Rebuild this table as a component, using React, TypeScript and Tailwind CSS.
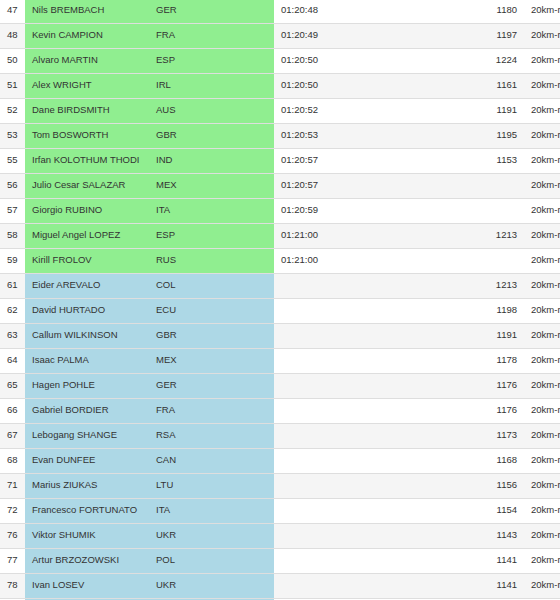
type Row = {
  rank: number;
  name: string;
  nat: string;
  time: string;
  points: string;
  group: "q" | "p";
};

const rows: Row[] = [
  { rank: 47, name: "Nils BREMBACH", nat: "GER", time: "01:20:48", points: "1180", group: "q" },
  { rank: 48, name: "Kevin CAMPION", nat: "FRA", time: "01:20:49", points: "1197", group: "q" },
  { rank: 50, name: "Alvaro MARTIN", nat: "ESP", time: "01:20:50", points: "1224", group: "q" },
  { rank: 51, name: "Alex WRIGHT", nat: "IRL", time: "01:20:50", points: "1161", group: "q" },
  { rank: 52, name: "Dane BIRDSMITH", nat: "AUS", time: "01:20:52", points: "1191", group: "q" },
  { rank: 53, name: "Tom BOSWORTH", nat: "GBR", time: "01:20:53", points: "1195", group: "q" },
  { rank: 55, name: "Irfan KOLOTHUM THODI", nat: "IND", time: "01:20:57", points: "1153", group: "q" },
  { rank: 56, name: "Julio Cesar SALAZAR", nat: "MEX", time: "01:20:57", points: "", group: "q" },
  { rank: 57, name: "Giorgio RUBINO", nat: "ITA", time: "01:20:59", points: "", group: "q" },
  { rank: 58, name: "Miguel Angel LOPEZ", nat: "ESP", time: "01:21:00", points: "1213", group: "q" },
  { rank: 59, name: "Kirill FROLOV", nat: "RUS", time: "01:21:00", points: "", group: "q" },
  { rank: 61, name: "Eider AREVALO", nat: "COL", time: "", points: "1213", group: "p" },
  { rank: 62, name: "David HURTADO", nat: "ECU", time: "", points: "1198", group: "p" },
  { rank: 63, name: "Callum WILKINSON", nat: "GBR", time: "", points: "1191", group: "p" },
  { rank: 64, name: "Isaac PALMA", nat: "MEX", time: "", points: "1178", group: "p" },
  { rank: 65, name: "Hagen POHLE", nat: "GER", time: "", points: "1176", group: "p" },
  { rank: 66, name: "Gabriel BORDIER", nat: "FRA", time: "", points: "1176", group: "p" },
  { rank: 67, name: "Lebogang SHANGE", nat: "RSA", time: "", points: "1173", group: "p" },
  { rank: 68, name: "Evan DUNFEE", nat: "CAN", time: "", points: "1168", group: "p" },
  { rank: 71, name: "Marius ZIUKAS", nat: "LTU", time: "", points: "1156", group: "p" },
  { rank: 72, name: "Francesco FORTUNATO", nat: "ITA", time: "", points: "1154", group: "p" },
  { rank: 76, name: "Viktor SHUMIK", nat: "UKR", time: "", points: "1143", group: "p" },
  { rank: 77, name: "Artur BRZOZOWSKI", nat: "POL", time: "", points: "1141", group: "p" },
  { rank: 78, name: "Ivan LOSEV", nat: "UKR", time: "", points: "1141", group: "p" },
  { rank: 79, name: "Quentin RICHARD", nat: "FRA", time: "", points: "1139", group: "p" },
];

export default function App() {
  return (
    <div className="h-[600px] w-[560px] overflow-hidden bg-white">
      <table
        className="-mt-[2px] w-[620px] table-fixed border-collapse text-[9.5px] text-[#333]"
        style={{ fontFamily: '"Liberation Sans", Arial, sans-serif' }}
      >
        <colgroup>
          <col className="w-[25px]" />
          <col className="w-[124px]" />
          <col className="w-[125px]" />
          <col className="w-[166px]" />
          <col className="w-[84px]" />
          <col className="w-[96px]" />
        </colgroup>
        <tbody>
          {rows.map((r, i) => {
            const stripe = i % 2 === 0 ? "bg-white" : "bg-[#f5f5f5]";
            const hl = r.group === "q" ? "bg-[#90ee90]" : "bg-[#add8e6]";
            return (
              <tr key={r.rank} className="h-[25px] border-b border-[#dedede]">
                <td className={`${stripe} pl-[7px]`}>{r.rank}</td>
                <td className={`${hl} whitespace-nowrap px-[7px]`}>{r.name}</td>
                <td className={`${hl} px-[7px]`}>{r.nat}</td>
                <td className={`${stripe} px-[7px]`}>{r.time}</td>
                <td className={`${stripe} px-[7px] text-right`}>{r.points}</td>
                <td className={`${stripe} whitespace-nowrap px-[7px]`}>20km-race-walk</td>
              </tr>
            );
          })}
        </tbody>
      </table>
    </div>
  );
}
